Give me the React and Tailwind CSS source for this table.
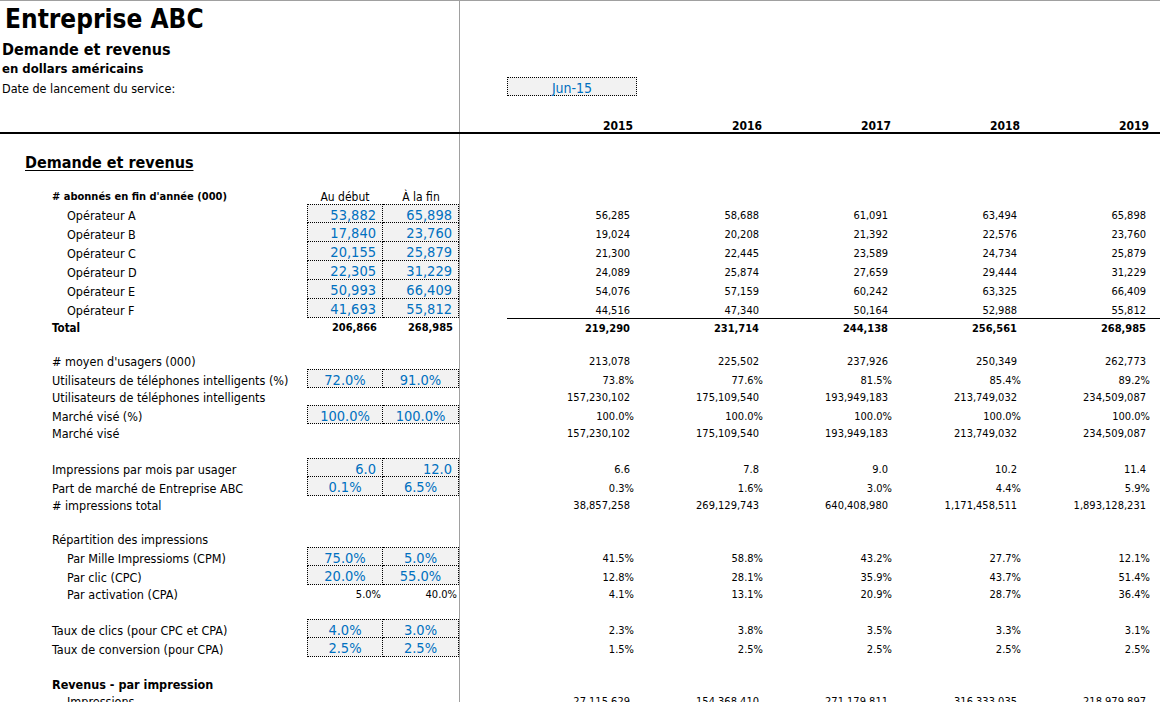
import React from "react";

const years = ["2015", "2016", "2017", "2018", "2019"];

// left inputs: [début, fin, kind] kind: "n" right aligned, "p" centered
const rows = [
  { type: "sub", label: "# abonnés en fin d'année (000)", h: "h-[18px]" },
  { label: "Opérateur A", indent: true, inputs: ["53,882", "65,898", "n"], top: true, vals: ["56,285", "58,688", "61,091", "63,494", "65,898"] },
  { label: "Opérateur B", indent: true, inputs: ["17,840", "23,760", "n"], vals: ["19,024", "20,208", "21,392", "22,576", "23,760"] },
  { label: "Opérateur C", indent: true, inputs: ["20,155", "25,879", "n"], vals: ["21,300", "22,445", "23,589", "24,734", "25,879"] },
  { label: "Opérateur D", indent: true, inputs: ["22,305", "31,229", "n"], vals: ["24,089", "25,874", "27,659", "29,444", "31,229"] },
  { label: "Opérateur E", indent: true, inputs: ["50,993", "66,409", "n"], vals: ["54,076", "57,159", "60,242", "63,325", "66,409"] },
  { label: "Opérateur F", indent: true, inputs: ["41,693", "55,812", "n"], last: true, vals: ["44,516", "47,340", "50,164", "52,988", "55,812"] },
  { type: "total", label: "Total", left: ["206,866", "268,985"], vals: ["219,290", "231,714", "244,138", "256,561", "268,985"] },
  { type: "blank" },
  { label: "# moyen d'usagers (000)", vals: ["213,078", "225,502", "237,926", "250,349", "262,773"] },
  { label: "Utilisateurs de téléphones intelligents (%)", inputs: ["72.0%", "91.0%", "p"], top: true, pct: true, vals: ["73.8%", "77.6%", "81.5%", "85.4%", "89.2%"] },
  { label: "Utilisateurs de téléphones intelligents", vals: ["157,230,102", "175,109,540", "193,949,183", "213,749,032", "234,509,087"] },
  { label: "Marché visé (%)", inputs: ["100.0%", "100.0%", "p"], top: true, pct: true, vals: ["100.0%", "100.0%", "100.0%", "100.0%", "100.0%"] },
  { label: "Marché visé", vals: ["157,230,102", "175,109,540", "193,949,183", "213,749,032", "234,509,087"] },
  { type: "blank" },
  { label: "Impressions par mois par usager", inputs: ["6.0", "12.0", "n"], top: true, vals: ["6.6", "7.8", "9.0", "10.2", "11.4"] },
  { label: "Part de marché de Entreprise ABC", inputs: ["0.1%", "6.5%", "p"], pct: true, vals: ["0.3%", "1.6%", "3.0%", "4.4%", "5.9%"] },
  { label: "# impressions total", vals: ["38,857,258", "269,129,743", "640,408,980", "1,171,458,511", "1,893,128,231"] },
  { type: "blank" },
  { label: "Répartition des impressions" },
  { label: "Par Mille Impressioms (CPM)", indent: true, inputs: ["75.0%", "5.0%", "p"], top: true, pct: true, vals: ["41.5%", "58.8%", "43.2%", "27.7%", "12.1%"] },
  { label: "Par clic (CPC)", indent: true, inputs: ["20.0%", "55.0%", "p"], pct: true, vals: ["12.8%", "28.1%", "35.9%", "43.7%", "51.4%"] },
  { label: "Par activation (CPA)", indent: true, small: ["5.0%", "40.0%"], pct: true, vals: ["4.1%", "13.1%", "20.9%", "28.7%", "36.4%"] },
  { type: "blank" },
  { label: "Taux de clics (pour CPC et CPA)", inputs: ["4.0%", "3.0%", "p"], top: true, pct: true, vals: ["2.3%", "3.8%", "3.5%", "3.3%", "3.1%"] },
  { label: "Taux de conversion (pour CPA)", inputs: ["2.5%", "2.5%", "p"], pct: true, vals: ["1.5%", "2.5%", "2.5%", "2.5%", "2.5%"] },
  { type: "blank" },
  { type: "sub", label: "Revenus - par impression", big: true, h: "h-[18px]" },
  { label: "Impressions", indent: true, vals: ["27,115,629", "154,368,410", "271,179,811", "316,333,035", "218,979,897"] },
];

function InputCell({ value, kind, first, top, last }) {
  return (
    <div
      className={`w-[76px] h-full flex items-center pt-[4px] bg-[#f2f2f2] border-dotted border-black border-r text-[14.5px] text-[#0070c0] ${
        first ? "border-l" : ""
      } ${top ? "border-t" : ""} ${last ? "border-b border-b-black border-b-solid" : "border-b"} ${
        kind === "p" ? "justify-center" : "justify-end pr-[6px]"
      }`}
    >
      {value}
    </div>
  );
}

function Row({ r }) {
  if (r.type === "blank") {
    return (
      <div className="flex h-[17px]">
        <div className="w-[460px] border-r border-[#a0a0a0]" />
        <div className="flex-1" />
      </div>
    );
  }
  const h = r.h || (r.inputs ? "h-[19px]" : "h-[17px]");
  const pad = r.inputs ? "pt-[6px]" : "pt-[4px]";
  const total = r.type === "total";
  return (
    <div className={`flex ${h}`}>
      <div className="w-[460px] flex border-r border-[#a0a0a0]">
        <div
          className={`w-[307px] flex items-center whitespace-nowrap ${pad} ${r.indent ? "pl-[67px]" : "pl-[52px]"} ${
            r.type === "sub" ? (r.big ? "font-bold text-[12.5px]" : "font-bold text-[11px]") : total ? "font-bold text-[11.5px]" : "text-[12.5px]"
          }`}
        >
          {r.label}
        </div>
        {r.inputs &&
          [0, 1].map((i) => (
            <InputCell key={i} value={r.inputs[i]} kind={r.inputs[2]} first={i === 0} top={r.top} last={r.last} />
          ))}
        {r.type === "sub" && r.label.startsWith("#") && (
          <>
            <div className="w-[76px] flex items-end justify-center text-[12px] leading-none pb-[1px]">Au début</div>
            <div className="w-[76px] flex items-end justify-center text-[12px] leading-none pb-[1px]">À la fin</div>
          </>
        )}
        {(r.left || r.small) &&
          (r.left || r.small).map((v) => (
            <div
              key={v}
              className={`w-[76px] flex items-center justify-end pt-[4px] ${total ? "font-bold text-[11px] pr-[6px]" : "text-[11px] pr-[2px]"}`}
            >
              {v}
            </div>
          ))}
      </div>
      <div className="flex-1 flex pl-[47px]">
        {r.vals && (
          <div className={`flex-1 flex ${total ? "border-t border-black" : ""}`}>
            {r.vals.map((v, i) => (
              <div
                key={i}
                className={`w-[129px] flex items-center justify-end text-[11px] ${pad} ${r.pct ? "pr-[2px]" : "pr-[6px]"} ${
                  total ? "font-bold" : ""
                }`}
              >
                {v}
              </div>
            ))}
          </div>
        )}
      </div>
    </div>
  );
}

export default function App() {
  return (
    <div className="w-[1160px] h-[702px] overflow-hidden bg-white text-black border-t border-[#a0a0a0] font-['DejaVu_Sans_Condensed','DejaVu_Sans',sans-serif]">
      {/* Header block */}
      <div className="flex h-[35px]">
        <div className="w-[460px] border-r border-[#a0a0a0] pl-[5px] flex items-center font-bold text-[26px] leading-none">
          Entreprise ABC
        </div>
      </div>
      <div className="flex h-[24px]">
        <div className="w-[460px] border-r border-[#a0a0a0] pl-[2px] flex items-end font-bold text-[16px] leading-none pb-[2px]">
          Demande et revenus
        </div>
      </div>
      <div className="flex h-[17px]">
        <div className="w-[460px] border-r border-[#a0a0a0] pl-[2px] flex items-center font-bold text-[13px] leading-none">
          en dollars américains
        </div>
      </div>
      <div className="flex h-[19px]">
        <div className="w-[460px] border-r border-[#a0a0a0] pl-[2px] flex items-center pt-[6px] text-[12.5px] leading-none">
          Date de lancement du service:
        </div>
        <div className="pl-[47px] flex">
          <div className="w-[130px] bg-[#f2f2f2] border border-dotted border-black flex items-center justify-center pt-[4px] text-[14px] text-[#0070c0]">
            Jun-15
          </div>
        </div>
      </div>
      <div className="flex h-[19px]">
        <div className="w-[460px] border-r border-[#a0a0a0]" />
      </div>
      <div className="flex h-[19px] border-b-2 border-black">
        <div className="w-[460px] border-r border-[#a0a0a0]" />
        <div className="flex-1 flex pl-[47px]">
          {years.map((y) => (
            <div key={y} className="w-[129px] flex items-end justify-end pr-[3px] font-bold text-[12px] leading-none">
              {y}
            </div>
          ))}
        </div>
      </div>

      {/* Section heading */}
      <div className="flex h-[52px]">
        <div className="w-[460px] border-r border-[#a0a0a0] pl-[25px] pt-[17px]">
          <span className="font-bold text-[16px] underline underline-offset-2 leading-none">Demande et revenus</span>
        </div>
      </div>

      {rows.map((r, i) => (
        <Row key={i} r={r} />
      ))}
    </div>
  );
}
